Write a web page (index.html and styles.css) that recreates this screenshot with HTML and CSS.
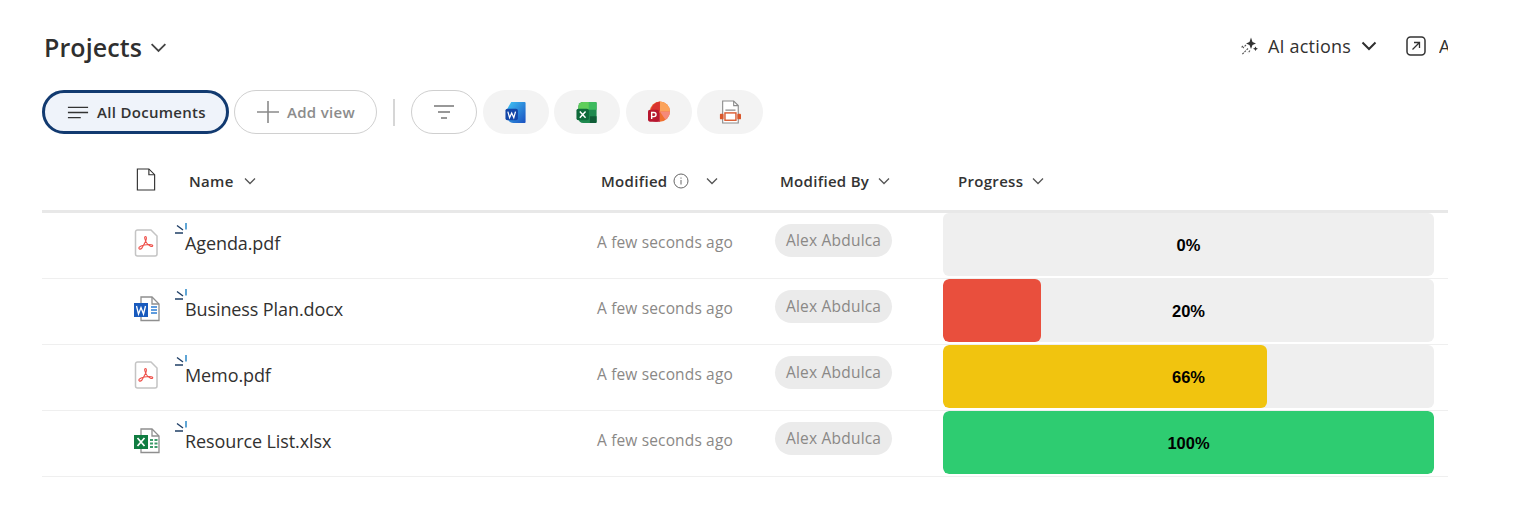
FILE: index.html
```html
<!DOCTYPE html>
<html lang="en">
<head>
<meta charset="utf-8">
<title>Projects</title>
<link rel="stylesheet" href="styles.css">
</head>
<body>
<svg class="defs" width="0" height="0" aria-hidden="true">
  <symbol id="chev" viewBox="0 0 12 8"><path d="M1 1.500 6 6.500 11 1.500" fill="none" stroke="currentColor" stroke-width="1.300"/></symbol>
  <symbol id="tick" viewBox="0 0 14 14"><path d="M0 10h8M2 2.500 8 7" fill="none" stroke-width="1.400" stroke="#1f3f66"/><path d="M11 0v6.500" stroke="#2b88c8" stroke-width="1.500"/></symbol>
  <symbol id="pdf" viewBox="0 0 24 28"><path d="M3.500 1h13.500l6 6v18a2 2 0 0 1-2 2h-17.500a2 2 0 0 1-2-2v-22a2 2 0 0 1 2-2z" fill="#fff" stroke="#c4c4c4" stroke-width="1.500"/><path d="M11.500 7.500c1.200 0 1.200 2.500 0 5l-3.500 6.500c-2 2-4 .8-2.700-.8 1.500-1.700 8-3.200 12-2.500 2.200.5 1.700 2.300-.300 1.700-2.300-.8-5-4-5.800-6.500-.6-2-.9-3.400.3-3.400z" fill="none" stroke="#ee4f49" stroke-width="1.100"/></symbol>
  <symbol id="docw" viewBox="0 0 27 26"><path d="M7 1h11l7 7v16.500h-18z" fill="#fff" stroke="#8f8f8f" stroke-width="1.300"/><path d="M18 1v7h7" fill="none" stroke="#8f8f8f" stroke-width="1.300"/><path d="M17 11h6M17 14h6M17 17h6" stroke="#2b7cd3" stroke-width="1.300"/><rect x="0" y="7" width="14" height="14" fill="#185abd"/><path d="M2.500 10 4.500 18 7 11.500 9.500 18 11.500 10" fill="none" stroke="#fff" stroke-width="1.300"/></symbol>
  <symbol id="docx" viewBox="0 0 27 26"><path d="M7 1h11l7 7v16.500h-18z" fill="#fff" stroke="#8f8f8f" stroke-width="1.300"/><path d="M18 1v7h7" fill="none" stroke="#8f8f8f" stroke-width="1.300"/><path d="M16 11h3v2h-3zM20.500 11h3v2h-3zM16 14.500h3v2h-3zM20.500 14.500h3v2h-3zM16 18h3v2h-3zM20.500 18h3v2h-3z" fill="#3d9b6a"/><rect x="0" y="7" width="14" height="14" fill="#107c41"/><path d="M3.500 10 10.500 18M10.500 10 3.500 18" stroke="#fff" stroke-width="1.700"/></symbol>
</svg>

<main class="page">
  <header class="title-row">
    <h1 class="title">Projects</h1>
    <svg class="title-chev"><use href="#chev"/></svg>
    <div class="actions">
      <svg class="ai-icon" viewBox="0 0 20 20"><path d="M12 1.500 13.500 6 17 7.500 13.500 9 12 13 10.500 9 7 7.500 10.500 6z" fill="#333"/><path d="M16.500 10.500 17.300 12 19 12.700 17.300 13.400 16.500 15 15.700 13.400 14 12.700 15.700 12z" fill="#333"/><path d="M7 9 4 12M9 12.500 3 18.500M4 10 2 12M11 14.500 9 17" stroke="#555" stroke-width="1.100" stroke-dasharray="2 1" fill="none"/></svg>
      <span class="ai-label">AI actions</span>
      <svg class="ai-chev" viewBox="0 0 16 10"><path d="M1.500 1.500 8 8 14.500 1.500" fill="none" stroke="#2f2f2f" stroke-width="2"/></svg>
      <svg class="open-icon" viewBox="0 0 20 20"><rect x="1" y="1" width="18" height="18" rx="3.500" fill="none" stroke="#333" stroke-width="1.500"/><path d="M6.500 13.500 13.500 6.500M8 6.500h5.500V12" fill="none" stroke="#333" stroke-width="1.300"/></svg>
      <span class="ai-label cut">A</span>
    </div>
  </header>

  <nav class="views">
    <button class="pill pill-active" type="button">
      <svg class="lines" viewBox="0 0 24 14"><path d="M1 1.500h22M1 7h22M1 12.500h14" stroke="#333" stroke-width="1.400"/></svg>
      All Documents
    </button>
    <button class="pill pill-add" type="button">
      <svg class="plus" viewBox="0 0 22 22"><path d="M11 0v22M0 11h22" stroke="#8a8a8a" stroke-width="1.600"/></svg>
      Add view
    </button>
    <span class="divider"></span>
    <button class="pill pill-filter" type="button" aria-label="Filter">
      <svg class="filter" viewBox="0 0 20 14"><path d="M0 1h20M4 7h12M7 13h6" stroke="#777" stroke-width="1.300"/></svg>
    </button>
    <span class="app">
      <svg class="app-icon" viewBox="0 0 22 24"><defs><linearGradient id="wg" x1="0" y1="0" x2="1" y2="1"><stop offset="0" stop-color="#3fc4f5"/><stop offset="1" stop-color="#1a4fc0"/></linearGradient></defs><path d="M6 1h14a1 1 0 0 1 1 1v20a1 1 0 0 1-1 1H8a6 6 0 0 1-6-6V8z" fill="url(#wg)"/><rect x="0" y="8" width="13" height="12" rx="2" fill="#1346a8"/><path d="M2.500 11 4.300 17.500 6.500 12.500 8.700 17.500 10.500 11" fill="none" stroke="#fff" stroke-width="1.300"/></svg>
    </span>
    <span class="app">
      <svg class="app-icon" viewBox="0 0 22 24"><path d="M7 1h13a1 1 0 0 1 1 1v20a1 1 0 0 1-1 1H7a5 5 0 0 1-5-5V6a5 5 0 0 1 5-5z" fill="#1f8a4f"/><path d="M7 1h6v8H2V6a5 5 0 0 1 5-5z" fill="#5fce5a"/><path d="M13 1h7a1 1 0 0 1 1 1v7h-8z" fill="#3dbb5e"/><path d="M14 16h7v6a1 1 0 0 1-1 1h-6z" fill="#0f5c36"/><rect x="0" y="8" width="13" height="12" rx="2" fill="#0e6a3a"/><path d="M3.500 11 9.500 17.500M9.500 11 3.500 17.500" stroke="#fff" stroke-width="1.500"/></svg>
    </span>
    <span class="app">
      <svg class="app-icon" viewBox="0 0 24 24"><circle cx="13" cy="11" r="11" fill="#f0702f"/><path d="M13 0a11 11 0 0 1 11 11H13z" fill="#fba35a"/><path d="M13 11h11a11 11 0 0 1-5 9z" fill="#f58a7a"/><path d="M13 0v11H3a11 11 0 0 1 10-11z" fill="#d9332f"/><path d="M3 12h10v10H8a6 6 0 0 1-6-6z" fill="#c4314b"/><rect x="0" y="9" width="12" height="13" rx="2" fill="#b7172f"/><path d="M4 19v-7h2.500a2 2 0 0 1 0 4.500H4" fill="none" stroke="#fff" stroke-width="1.500"/></svg>
    </span>
    <span class="app">
      <svg class="app-icon app-slide" viewBox="0 0 24 26"><path d="M4 1h12l5 5v19H4z" fill="#fff" stroke="#8b8b8b" stroke-width="1.200"/><path d="M16 1v5h5M7 11h11" fill="none" stroke="#8b8b8b" stroke-width="1.200"/><rect x="6.500" y="14" width="12" height="8" fill="#fff" stroke="#d9572b" stroke-width="1.500"/><rect x="1" y="15" width="4" height="6" rx="1" fill="#d9572b"/><rect x="20" y="15" width="4" height="6" rx="1" fill="#d9572b"/></svg>
    </span>
  </nav>

  <section class="list">
    <div class="row head">
      <div class="cell-icon"><svg class="head-doc" viewBox="0 0 20 24"><path d="M1 1h12l6 6v16H1z" fill="#fff" stroke="#333" stroke-width="1.200"/><path d="M13 1v6h6" fill="none" stroke="#333" stroke-width="1.200"/></svg></div>
      <div class="hcell hname">Name<svg class="hchev name-chev"><use href="#chev"/></svg></div>
      <div class="hcell hmod">Modified
        <svg class="info" viewBox="0 0 16 16"><circle cx="8" cy="8" r="7" fill="none" stroke="#666" stroke-width="1"/><path d="M8 7v4.500M8 4.500v1.200" stroke="#666" stroke-width="1"/></svg>
        <svg class="hchev mod-chev"><use href="#chev"/></svg></div>
      <div class="hcell hby">Modified By<svg class="hchev"><use href="#chev"/></svg></div>
      <div class="hcell hprog">Progress<svg class="hchev"><use href="#chev"/></svg></div>
    </div>

    <div class="row item">
      <div class="cell-icon"><svg class="file file-pdf"><use href="#pdf"/></svg></div>
      <div class="name"><svg class="tick"><use href="#tick"/></svg>Agenda.pdf</div>
      <div class="mod">A few seconds ago</div>
      <div class="by"><span class="chip">Alex Abdulca</span></div>
      <div class="bar"><span class="fill" style="width:0%"></span><span class="pct">0%</span></div>
    </div>
    <div class="row item">
      <div class="cell-icon"><svg class="file file-doc"><use href="#docw"/></svg></div>
      <div class="name"><svg class="tick"><use href="#tick"/></svg>Business Plan.docx</div>
      <div class="mod">A few seconds ago</div>
      <div class="by"><span class="chip">Alex Abdulca</span></div>
      <div class="bar"><span class="fill red" style="width:20%"></span><span class="pct">20%</span></div>
    </div>
    <div class="row item">
      <div class="cell-icon"><svg class="file file-pdf"><use href="#pdf"/></svg></div>
      <div class="name"><svg class="tick"><use href="#tick"/></svg>Memo.pdf</div>
      <div class="mod">A few seconds ago</div>
      <div class="by"><span class="chip">Alex Abdulca</span></div>
      <div class="bar"><span class="fill yellow" style="width:66%"></span><span class="pct">66%</span></div>
    </div>
    <div class="row item">
      <div class="cell-icon"><svg class="file file-doc"><use href="#docx"/></svg></div>
      <div class="name"><svg class="tick"><use href="#tick"/></svg>Resource List.xlsx</div>
      <div class="mod">A few seconds ago</div>
      <div class="by"><span class="chip">Alex Abdulca</span></div>
      <div class="bar"><span class="fill green" style="width:100%"></span><span class="pct">100%</span></div>
    </div>
  </section>
</main>
</body>
</html>
```

FILE: styles.css
```css
* { box-sizing: border-box; }
html, body { margin: 0; padding: 0; background: #fff; }
body { font-family: "Open Sans", "Noto Sans", "Liberation Sans", sans-serif; color: #323130; overflow: hidden; height: 524px; }
.defs { position: absolute; }
.page { width: 1448px; padding: 25px 0 0 42px; overflow: hidden; }

.title-row { display: flex; align-items: center; height: 44px; padding-left: 2px; }
.title { margin: 0; font-size: 25px; font-weight: 600; letter-spacing: 0.1px; color: #2f2f2f; line-height: 44px; }
.title-chev { width: 17px; height: 11px; margin-left: 8px; margin-top: 1px; color: #444; }
.actions { margin-left: auto; display: flex; align-items: center; margin-top: -2px; }
.ai-icon { width: 20px; height: 20px; }
.ai-label { margin-left: 9px; font-size: 18px; letter-spacing: 0.2px; color: #323130; }
.ai-chev { width: 16px; height: 10px; margin-left: 10px; }
.open-icon { width: 20px; height: 20px; margin-left: 29px; }
.cut { width: 9px; overflow: hidden; margin-left: 13px; }

.views { display: flex; align-items: center; height: 44px; margin-top: 21px; }
.pill { display: flex; align-items: center; height: 44px; border-radius: 22px; font-family: inherit; font-weight: 600; font-size: 15px; letter-spacing: 0.3px; padding: 0; white-space: nowrap; }
.pill-active { width: 187px; padding-left: 22px; border: 3px solid #123a70; background: #eff3fa; color: #333; }
.lines { width: 22px; height: 13px; margin-right: 8px; }
.pill-add { width: 143px; margin-left: 5px; padding-left: 22px; border: 1.500px solid #d0d0d0; background: #fff; color: #8c8c8c; }
.plus { width: 22px; height: 22px; margin-right: 8px; }
.divider { width: 2px; height: 27px; margin: 0 16px; background: #d6d6d6; }
.pill-filter { width: 66px; justify-content: center; border: 1.500px solid #cfcfcf; background: #fff; }
.filter { width: 20px; height: 14px; }
.app { display: flex; align-items: center; justify-content: center; width: 66px; height: 44px; margin-left: 5.500px; border-radius: 22px; background: #f3f3f3; }
.app-icon { width: 22px; height: 23px; }
.app-slide { height: 26px; }

.list { margin-top: 22px; }
.row { display: grid; grid-template-columns: 143px 412px 178px 168px 491px; align-items: center; height: 66px; border-bottom: 1px solid #efefef; }
.head { height: 57px; border-bottom: 3px solid #e8e8e8; align-items: start; padding-top: 13px; }

.cell-icon { display: flex; align-items: center; width: 143px; height: 24px; padding-left: 92px; }
.item .cell-icon { height: 28px; margin-top: -6px; }
.head-doc { width: 20px; height: 23px; margin-left: 2px; margin-top: -3px; }
.file { display: block; }
.file-pdf { width: 24px; height: 28px; }
.file-doc { width: 27px; height: 26px; margin-left: 0; }

.hcell { font-size: 15px; font-weight: 600; letter-spacing: 0.3px; color: #333; display: flex; align-items: center; height: 24px; padding-left: 4px; white-space: nowrap; }
.hby { padding-left: 5px; }
.hprog { padding-left: 15px; }
.hchev { width: 12px; height: 8px; margin-left: 9px; color: #555; }
.name-chev { margin-left: 10px; }
.info { width: 16px; height: 16px; margin-left: 5px; }
.mod-chev { margin-left: 17px; }

.name { position: relative; font-size: 18px; letter-spacing: -0.1px; color: #323130; margin-top: -5px; white-space: nowrap; }
.tick { position: absolute; left: -10px; top: -8px; width: 14px; height: 14px; }
.mod { font-size: 15.500px; letter-spacing: 0.15px; color: #8a8886; margin-top: -7px; }
.by { display: flex; align-items: center; margin-top: -10px; }
.chip { display: block; height: 33px; line-height: 33px; padding: 0 11px; border-radius: 17px; background: #ebebeb; color: #8a8886; font-size: 15.500px; letter-spacing: 0.2px; white-space: nowrap; }

.bar { position: relative; align-self: start; width: 491px; height: 63px; border-radius: 6px; background: #efefef; overflow: hidden; }
.fill { display: block; height: 100%; border-radius: 6px; }
.red { background: #e94f3d; }
.yellow { background: #f1c40f; }
.green { background: #2ecc71; }
.pct { position: absolute; left: 0; right: 0; top: 22px; text-align: center; font-family: "Liberation Sans", Arial, sans-serif; font-weight: 700; font-size: 16.500px; line-height: 20px; color: #000; }
```
